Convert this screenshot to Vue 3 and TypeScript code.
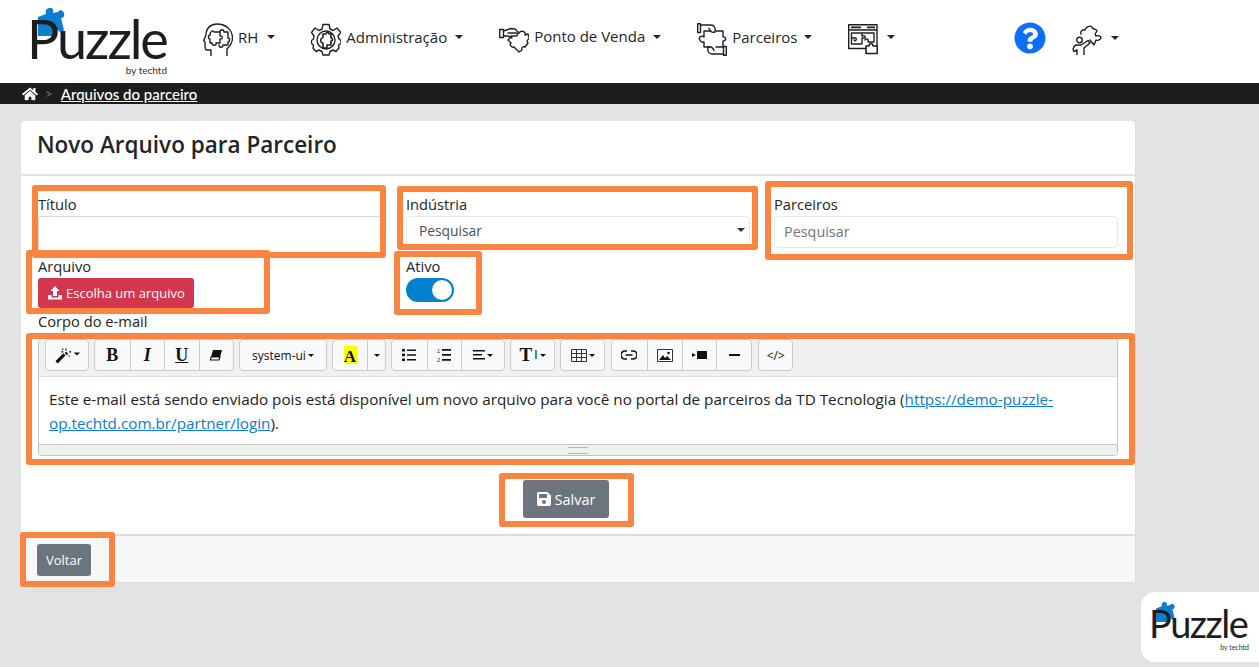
<script setup lang="ts">
const navItems = [
  { label: 'RH', icon: 'head' },
  { label: 'Administração', icon: 'gear' },
  { label: 'Ponto de Venda', icon: 'hand' },
  { label: 'Parceiros', icon: 'partner' },
  { label: '', icon: 'window' },
]

// caixas laranja de anotacao por cima do print
const marks = [
  { x: 32, y: 185, w: 354, h: 73 },
  { x: 397, y: 186, w: 361, h: 64 },
  { x: 765, y: 181, w: 368, h: 79 },
  { x: 26, y: 250, w: 244, h: 64 },
  { x: 394, y: 251, w: 88, h: 64 },
  { x: 26, y: 333, w: 1109, h: 132 },
  { x: 499, y: 473, w: 135, h: 54 },
  { x: 20, y: 532, w: 95, h: 55 },
]

function markStyle(m: { x: number; y: number; w: number; h: number }) {
  return { left: m.x + 'px', top: m.y + 'px', width: m.w + 'px', height: m.h + 'px' }
}
</script>

<template>
  <div class="page">
    <header class="topbar">
      <div class="logo">
        <svg class="logo-piece" viewBox="0 0 34 34">
          <path d="M3 12L11 9C10 5 12 3 15 3C18 3 19 5 18 8L23 7C24 4 28 5 29 8C30 11 28 13 26 13L29 25L26 28C24 26 22 24 20 24L19 31L3 31Z" fill="#0a7fd0" />
        </svg>
        <span class="logo-word">Puzzle</span>
        <span class="logo-by">by techtd</span>
      </div>

      <nav class="nav">
        <a v-for="item in navItems" :key="item.icon" class="nav-item" :class="'nav-' + item.icon">
          <svg class="nav-icon" viewBox="0 0 30 33" fill="none" stroke="#1f1f1f" stroke-width="1.400" stroke-linejoin="round" stroke-linecap="round">
            <template v-if="item.icon === 'head'">
              <path d="M8 33V27H4C2 27 2 25 2 23V19L.7 17.500L3 12C3 5 8 1 14 1C23 1 29.500 7 29.500 15C29.500 21 26 24 24 26V33" />
              <path d="M7 12C7 8 10 7 11 9H17V13C20 12 20 17 17 16V20H13C14 23 9 23 9 20H7V16C5 16 5 12 7 12Z" />
              <path d="M17 9C17 6 21 6 21 9H25V15C27 15 27 19 25 19V22H20C20 25 16 25 16 22" />
            </template>
            <template v-else-if="item.icon === 'gear'">
              <path d="M12 1.500H18L19 6L22 7.500L26 5L30 9.500L27 13L28 16L30 17.500V20.500L27.500 22L28 25L25 28.500L22 27L19 28.500L18 32H12L11 28.500L8 27L5 28.500L2 25L2.500 22L.5 20.500V17.500L2.500 16L3 13L.5 9.500L4 5L8 7.500L11 6Z" />
              <circle cx="15" cy="17" r="9" />
              <path d="M12 11H15C15 9 18 9 18 11H20V15C22 15 22 18 20 18V22H16V25H12V20C10 20 9 18 10 16C11 15 12 15 12 14Z" stroke-width="1.600" />
            </template>
            <template v-else-if="item.icon === 'hand'">
              <path d="M.7 6.500H4.500V14.500H.7Z" />
              <path d="M4.500 8L12 5.500L16 6L20 10M4.500 13H9L13 15M9 10H17C19 10 19 13 17 13H12" />
              <path d="M20 10C22 7 27 8 26 12L29 11L30.500 16C29 16 27 18 29 20L26 24C24 23 22 25 23 27L20 29L15 24C13 25 10 22 12 20L9 17L12 14" />
            </template>
            <template v-else-if="item.icon === 'partner'">
              <path d="M.7 .7H3.500V9.500H.7ZM26.500 23.500H29.300V32.300H26.500Z" />
              <path d="M3.500 2H14C17 2 19 5 18 9C15 10 13 8 12 5.500M26.500 31H15C12 31 10 28 11 24C14 23 16 25 17 27.500" />
              <path d="M7 8H13M19 8H26V14C29 13 30 18 26 18V24H19M13 24H7V19C4 20 1 16 3 14C4 13 6 13 7 14V8" />
            </template>
            <template v-else>
              <path d="M.7 1.700H29V25.500H.7ZM.7 7H29" />
              <path d="M3 4.300H13M19 4.300H27" stroke-width="1.800" stroke-linecap="butt" />
              <path d="M3.500 10H14V13C16 12 18 13 17 15H14V21H3.500ZM3.500 15H8C9 17 7 19 6 17M14 10H26V19H20C21 16 18 15 17 17" />
              <path d="M18 23H21C21 20 25 20 25 23H29.300V30.500H18Z" fill="#fff" stroke-width="1.600" />
            </template>
          </svg>
          <span v-if="item.label" class="nav-label">{{ item.label }}</span>
          <i class="caret" />
        </a>
      </nav>

      <svg class="help" viewBox="0 0 512 512">
        <path fill="#0d6efd" d="M504 256c0 137-111 248-248 248S8 393 8 256 119 8 256 8s248 111 248 248zM263 90c-55 0-90 23-117 64-4 5-3 12 3 16l35 26c5 4 13 3 17-2 18-23 30-36 58-36 21 0 46 13 46 33 0 15-12 23-33 34-23 13-55 30-55 72v5c0 7 5 12 12 12h56c7 0 12-5 12-12v-2c0-29 85-30 85-109 0-60-62-101-119-101zm-7 253c-26 0-47 21-47 47s21 47 47 47 47-21 47-47-21-47-47-47z" />
      </svg>
      <a class="user-menu">
        <svg class="user-icon" viewBox="0 0 30 30" fill="none" stroke="#1f1f1f" stroke-width="1.400" stroke-linejoin="round" stroke-linecap="round">
          <path d="M9 9C8 6 11 4 13 5C14 2 18 0 20 2C20 5 24 3 25 6C24 8 22 9 24 11C26 10 29 11 29 13C28 15 25 16 24 15L22 20L18 15" />
          <circle cx="7.500" cy="15" r="2.800" />
          <path d="M5 30V25L2 26.500C0 24 2 21 4 20H9L16 15.500L18 18L12 23V30" />
        </svg>
        <i class="caret" />
      </a>
    </header>

    <div class="crumbs">
      <svg class="home" viewBox="0 0 576 512">
        <path fill="#fff" d="M280 148L96 300v164c0 9 7 16 16 16l112-1c9 0 16-7 16-16v-95c0-9 7-16 16-16h64c9 0 16 7 16 16v95c0 9 7 16 16 16l112 1c9 0 16-7 16-16V300L296 148c-5-4-11-4-16 0zm291 103l-83-69V44c0-7-5-12-12-12h-56c-7 0-12 5-12 12v73l-90-74c-18-15-43-15-61 0L5 251c-5 4-6 12-2 17l26 31c4 5 12 6 17 2L280 108c5-4 11-4 16 0l235 193c5 4 13 3 17-2l26-31c4-5 3-13-3-17z" />
      </svg>
      <span class="crumb-sep">&gt;</span>
      <a class="crumb-link">Arquivos do parceiro</a>
    </div>

    <main class="content">
      <section class="card">
        <h1 class="card-title">Novo Arquivo para Parceiro</h1>

        <div class="card-body">
          <div class="row-top">
            <div class="field">
              <label>Título</label>
              <div class="input input-title" />
            </div>
            <div class="field">
              <label>Indústria</label>
              <div class="input input-select">Pesquisar<i class="caret caret-dark" /></div>
            </div>
            <div class="field">
              <label>Parceiros</label>
              <div class="input input-search">Pesquisar</div>
            </div>
          </div>

          <div class="row-file">
            <div class="field">
              <label>Arquivo</label>
              <button class="btn-file">
                <svg viewBox="0 0 16 16" width="16" height="16">
                  <path fill="#fff" d="M8 1l4.500 5H10v5H6V6H3.500zM1 10h3.500v2.500h7V10H15v4.500H1z" />
                </svg>
                Escolha um arquivo
              </button>
            </div>
            <div class="field">
              <label>Ativo</label>
              <span class="toggle"><span class="knob" /></span>
            </div>
          </div>

          <label class="body-label">Corpo do e-mail</label>
          <div class="editor">
            <div class="toolbar">
              <div class="tgroup">
                <button class="tbtn w42">
                  <svg viewBox="0 0 24 16" width="25" height="17">
                    <path d="M1.500 14.500L9 7" stroke="#111" stroke-width="3" />
                    <path d="M10 5l2 2" stroke="#111" stroke-width="2" />
                    <path d="M10.500 1v2.500M6 4.500h2M13.500 4.500h2M7 1.500l1 1M13 8l1 1" stroke="#111" stroke-width="1" />
                    <path d="M18 5h6l-3 3z" fill="#111" />
                  </svg>
                </button>
              </div>
              <div class="tgroup">
                <button class="tbtn w35 glyph">B</button>
                <button class="tbtn w35 glyph ital">I</button>
                <button class="tbtn w35 glyph und">U</button>
                <button class="tbtn w35">
                  <svg viewBox="0 0 14 14" width="14" height="14">
                    <path d="M4 2h9l-2 7H2z" fill="#111" />
                    <path d="M2 9h9l-1 3H1.500z" fill="#fff" stroke="#111" stroke-width="1.200" />
                  </svg>
                </button>
              </div>
              <div class="tgroup">
                <button class="tbtn w86 font-btn">system-ui<i class="mini" /></button>
              </div>
              <div class="tgroup">
                <button class="tbtn w34"><span class="color-a">A</span></button>
                <button class="tbtn w18"><i class="mini" /></button>
              </div>
              <div class="tgroup">
                <button class="tbtn w35">
                  <svg viewBox="0 0 14 12" width="14" height="12" fill="#111">
                    <path d="M0 0h3v2.500H0zM0 4.700h3v2.500H0zM0 9.400h3v2.500H0zM5 .5h9v1.600H5zM5 5.200h9v1.600H5zM5 9.900h9v1.600H5z" />
                  </svg>
                </button>
                <button class="tbtn w35">
                  <svg viewBox="0 0 14 14" width="14" height="14" fill="#111">
                    <path d="M5 1h9v1.800H5zM5 6h9v1.800H5zM5 11h9v1.800H5z" />
                    <text x="0" y="5" font-size="5.500" font-family="Liberation Sans">1</text>
                    <text x="0" y="13.500" font-size="5.500" font-family="Liberation Sans">2</text>
                  </svg>
                </button>
                <button class="tbtn w43">
                  <svg viewBox="0 0 12 10" width="12" height="10" fill="#111">
                    <path d="M0 0h12v1.500H0zM0 4h9v1.500H0zM0 8h12v1.500H0z" />
                  </svg>
                  <i class="mini" />
                </button>
              </div>
              <div class="tgroup">
                <button class="tbtn w43 glyph height-btn">T<span class="ti">I</span><i class="mini" /></button>
              </div>
              <div class="tgroup">
                <button class="tbtn w43">
                  <svg viewBox="0 0 16 13" width="16" height="13" fill="none" stroke="#333" stroke-width="1">
                    <path d="M.5.500h15v12H.5zM5.500.500v12M10.500.500v12M.5 4.500h15M.5 8.500h15" />
                  </svg>
                  <i class="mini" />
                </button>
              </div>
              <div class="tgroup links">
                <button class="tbtn w35">
                  <svg viewBox="0 0 16 10" width="16" height="10" fill="none" stroke="#111" stroke-width="1.700">
                    <path d="M6 1H4a4 4 0 000 8h2M10 1h2a4 4 0 010 8h-2M4.500 5h7" />
                  </svg>
                </button>
                <button class="tbtn w35">
                  <svg viewBox="0 0 16 13" width="16" height="13">
                    <path d="M.5.500h15v12H.5z" fill="#fff" stroke="#333" />
                    <path d="M2 11l4-5 2 3 2-2 4 4z" fill="#111" />
                    <circle cx="11.500" cy="4" r="1.300" fill="#111" />
                  </svg>
                </button>
                <button class="tbtn w35">
                  <svg viewBox="0 0 15 10" width="15" height="10" fill="#111">
                    <path d="M5 1h10v8H5zM0 3l4 2-4 2z" />
                  </svg>
                </button>
                <button class="tbtn w35"><i class="dash" /></button>
              </div>
              <div class="tgroup">
                <button class="tbtn w33 code">&lt;/&gt;</button>
              </div>
            </div>

            <div class="editor-text">
              Este e-mail está sendo enviado pois está disponível um novo arquivo para você no portal de parceiros da TD Tecnologia (<a class="link">https://demo-puzzle-op.techtd.com.br/partner/login</a>).
            </div>
            <div class="statusbar"><i class="grip" /></div>
          </div>

          <div class="save-row">
            <button class="btn-gray btn-save">
              <svg viewBox="0 0 448 512" width="14" height="16">
                <path fill="#fff" d="M433 129l-84-84a48 48 0 00-34-14H48C21 31 0 52 0 79v352c0 27 21 48 48 48h352c27 0 48-21 48-48V163c0-13-5-25-15-34zM224 415a64 64 0 110-128 64 64 0 010 128zm96-304v100c0 7-5 12-12 12H76c-7 0-12-5-12-12V107c0-7 5-12 12-12h228c3 0 6 1 8 3l4 4c3 2 4 6 4 9z" />
              </svg>
              Salvar
            </button>
          </div>
        </div>

        <footer class="card-footer">
          <button class="btn-gray btn-back">Voltar</button>
        </footer>
      </section>
    </main>

    <div class="badge">
      <div class="logo logo-small">
        <svg class="logo-piece" viewBox="0 0 34 34">
          <path d="M3 12L11 9C10 5 12 3 15 3C18 3 19 5 18 8L23 7C24 4 28 5 29 8C30 11 28 13 26 13L29 25L26 28C24 26 22 24 20 24L19 31L3 31Z" fill="#0a7fd0" />
        </svg>
        <span class="logo-word">Puzzle</span>
        <span class="logo-by">by techtd</span>
      </div>
    </div>

    <div v-for="(m, i) in marks" :key="i" class="mark" :style="markStyle(m)" />
  </div>
</template>

<style scoped>
.page {
  position: relative;
  width: 1259px;
  height: 667px;
  overflow: hidden;
  background: #e3e3e3;
  color: #212529;
  font-family: "Open Sans", "Noto Sans", sans-serif;
  font-size: 14.700px;
}

.topbar {
  display: flex;
  align-items: flex-start;
  height: 83px;
  padding-left: 32px;
  background: #fff;
  box-sizing: border-box;
}

.logo {
  position: relative;
  flex: none;
  width: 136px;
  height: 83px;
  margin-right: 35px;
}

.logo-piece {
  position: absolute;
  left: 3px;
  top: 5px;
  width: 34px;
  height: 34px;
}

.logo-word {
  position: absolute;
  left: -5px;
  top: 13px;
  font-family: Lato, sans-serif;
  font-size: 54px;
  line-height: 52px;
  letter-spacing: -2.100px;
  color: #1d1d1d;
}

.logo-by {
  position: absolute;
  right: 1px;
  top: 64px;
  font-family: Lato, sans-serif;
  font-size: 10px;
  line-height: 12px;
  color: #333;
}

.logo-small {
  width: 98px;
  height: 64px;
  margin: 0;
}

.logo-small .logo-piece {
  left: 2px;
  top: 8px;
  width: 24px;
  height: 24px;
}

.logo-small .logo-word {
  left: -3px;
  top: 13px;
  font-size: 38px;
  line-height: 36px;
  letter-spacing: -1.500px;
}

.logo-small .logo-by {
  top: 51px;
  font-size: 7px;
  line-height: 8px;
}

.nav {
  display: flex;
  gap: 36px;
  padding-top: 23px;
}

.nav-item {
  display: flex;
  align-items: center;
  height: 33px;
  font-size: 15px;
  color: #212529;
}

.nav-icon {
  flex: none;
  width: 30px;
  height: 33px;
  margin-right: 5px;
}

.nav-label {
  margin-bottom: 5px;
  white-space: nowrap;
}

.nav-hand .nav-label {
  margin-bottom: 7px;
}

.caret {
  display: inline-block;
  width: 0;
  height: 0;
  margin-left: 8px;
  border-top: 4.500px solid #212529;
  border-left: 4.500px solid transparent;
  border-right: 4.500px solid transparent;
}

.nav-item .caret {
  margin-bottom: 6px;
}

.nav-item.nav-head .caret {
  margin-left: 9px;
}

.nav-item.nav-partner .caret {
  margin-left: 7px;
}

.nav-item.nav-window .caret {
  margin-left: 4px;
}

.help {
  flex: none;
  width: 32px;
  height: 32px;
  margin: 22px 0 0 119px;
}

.user-menu {
  display: flex;
  align-items: center;
  margin: 25px 0 0 26px;
}

.user-icon {
  width: 30px;
  height: 30px;
}

.user-menu .caret {
  margin: 0 0 4px 9px;
}

.crumbs {
  display: flex;
  align-items: center;
  height: 21px;
  padding-left: 22px;
  background: #1d1d1d;
  box-sizing: border-box;
}

.home {
  width: 16px;
  height: 14px;
}

.crumb-sep {
  margin: 0 9px 0 8px;
  font-size: 10px;
  color: #8b8b8b;
}

.crumb-link {
  font-family: Lato, sans-serif;
  font-size: 15px;
  font-weight: 500;
  color: #fff;
  text-decoration: underline;
}

.content {
  padding: 17px 0 0 21px;
}

.card {
  width: 1115px;
  height: 462px;
  background: #fff;
  border-radius: 4px;
  display: flex;
  flex-direction: column;
  overflow: hidden;
  box-sizing: border-box;
  border-right: 1px solid #dcdcdc;
}

.card-title {
  flex: none;
  margin: 0;
  height: 55px;
  padding-left: 16px;
  font-size: 22.500px;
  font-weight: 600;
  line-height: 48px;
  color: #212529;
  border-bottom: 2px solid #e3e3e3;
  box-sizing: border-box;
}

.card-body {
  flex: 1;
  padding: 17px 17px 0;
}

.row-top,
.row-file {
  display: grid;
  grid-template-columns: 344px 344px 344px;
  column-gap: 24px;
}

.row-top {
  height: 62px;
}

.row-file {
  height: 56px;
}

.field {
  display: flex;
  flex-direction: column;
  align-items: flex-start;
}

label {
  display: block;
  height: 22px;
  line-height: 23px;
}

label.body-label {
  line-height: 21px;
}

.input {
  width: 100%;
  height: 34px;
  box-sizing: border-box;
  margin-top: 1px;
  border: 1px solid #e5e7ea;
  border-radius: 4px;
  line-height: 30px;
  color: #495057;
  font-size: 13.800px;
}

.input-title {
  border-color: #d8dadd;
  border-bottom: none;
  height: 36px;
}

.input-select {
  position: relative;
  height: 30px;
  line-height: 28px;
  padding-left: 12px;
}

.input-select .caret-dark {
  position: absolute;
  right: 4px;
  top: 11px;
  border-top-color: #333;
}

.input-search {
  height: 32px;
  padding-left: 9px;
  font-size: 14.400px;
  color: #6f7680;
}

.btn-file {
  display: flex;
  align-items: center;
  gap: 3px;
  width: 156px;
  height: 30px;
  margin-top: 1px;
  padding: 0 0 0 9px;
  border: none;
  border-radius: 3px;
  background: #d2374e;
  color: #fff;
  font-family: inherit;
  font-size: 13px;
}

.toggle {
  position: relative;
  display: block;
  width: 48px;
  height: 24px;
  margin-top: 1px;
  border-radius: 12px;
  background: #0480d0;
}

.knob {
  position: absolute;
  right: 2px;
  top: 2px;
  width: 20px;
  height: 20px;
  border-radius: 50%;
  background: #fff;
}

.editor {
  height: 118px;
  margin-top: 5px;
  border: 1px solid #c4c4c4;
  border-radius: 4px;
  box-sizing: border-box;
  display: flex;
  flex-direction: column;
  overflow: hidden;
}

.toolbar {
  flex: none;
  display: flex;
  gap: 5px;
  height: 38px;
  padding: 0 0 0 6px;
  background: #f0f0f0;
  border-bottom: 1px solid #dedede;
  box-sizing: border-box;
}

.tgroup {
  display: flex;
  height: 32px;
  border: 1px solid #c9cacb;
  border-radius: 4px;
  background: #f8f9fa;
  overflow: hidden;
  box-sizing: border-box;
}

.tgroup.links {
  margin: 0 1px;
}

.tbtn {
  display: flex;
  align-items: center;
  justify-content: center;
  gap: 2px;
  height: 100%;
  padding: 0;
  border: none;
  border-left: 1px solid #c9cacb;
  background: none;
  color: #111;
  font-family: inherit;
  box-sizing: border-box;
}

.tbtn:first-child {
  border-left: none;
}

.w18 { width: 18px; }
.w33 { width: 33px; }
.w34 { width: 34px; }
.w35 { width: 34.500px; }
.w42 { width: 42px; }
.w43 { width: 43px; }
.w86 { width: 86px; }

.links .w35 {
  width: 34.800px;
}

.glyph {
  font-family: "Liberation Serif", serif;
  font-size: 18px;
  font-weight: 700;
}

.ital { font-style: italic; }
.und { text-decoration: underline; }

.font-btn {
  font-size: 12px;
}

.mini {
  display: inline-block;
  width: 0;
  height: 0;
  border-top: 3px solid #111;
  border-left: 3px solid transparent;
  border-right: 3px solid transparent;
}

.color-a {
  display: block;
  width: 13px;
  height: 18px;
  background: #ff0;
  font-family: "Liberation Serif", serif;
  font-size: 17px;
  font-weight: 700;
  line-height: 21px;
  text-align: center;
}

.height-btn {
  font-size: 19px;
}

.ti {
  font-family: "Liberation Sans", sans-serif;
  font-size: 12px;
  font-weight: 400;
}

.dash {
  display: block;
  width: 11px;
  height: 2px;
  background: #111;
}

.code {
  font-size: 12px;
}

.editor-text {
  flex: 1;
  padding: 10px 10px 0;
  font-size: 15.250px;
  line-height: 24px;
  color: #222;
}

.link {
  color: #0a7bd5;
  text-decoration: underline;
}

.statusbar {
  flex: none;
  display: flex;
  justify-content: center;
  height: 11px;
  background: #f0f0f0;
  border-top: 1px solid #c4c4c4;
  box-sizing: border-box;
}

.grip {
  width: 20px;
  height: 5px;
  margin-top: 2px;
  border-top: 1px solid #b8b8b8;
  border-bottom: 1px solid #b8b8b8;
}

.save-row {
  display: flex;
  justify-content: center;
  margin-top: 24px;
  padding-right: 24px;
}

.btn-gray {
  display: flex;
  align-items: center;
  justify-content: center;
  border: none;
  border-radius: 3px;
  background: #6c757d;
  color: #fff;
  font-family: inherit;
}

.btn-save {
  gap: 4px;
  width: 86px;
  height: 38px;
  font-size: 14.500px;
}

.card-footer {
  flex: none;
  height: 49px;
  padding: 8px 0 0 16px;
  background: #f7f7f7;
  border-top: 2px solid #dcdcdc;
  border-bottom: 1px solid #dcdcdc;
  box-sizing: border-box;
}

.btn-back {
  width: 54px;
  height: 32px;
  font-size: 13px;
}

.badge {
  position: absolute;
  left: 1141px;
  top: 592px;
  width: 118px;
  height: 70px;
  padding: 0 0 0 11px;
  background: #fff;
  border-radius: 14px 0 0 14px;
  box-sizing: border-box;
}

.mark {
  position: absolute;
  border: 6px solid #fb8440;
  border-radius: 3px;
  box-sizing: border-box;
  pointer-events: none;
}
</style>
